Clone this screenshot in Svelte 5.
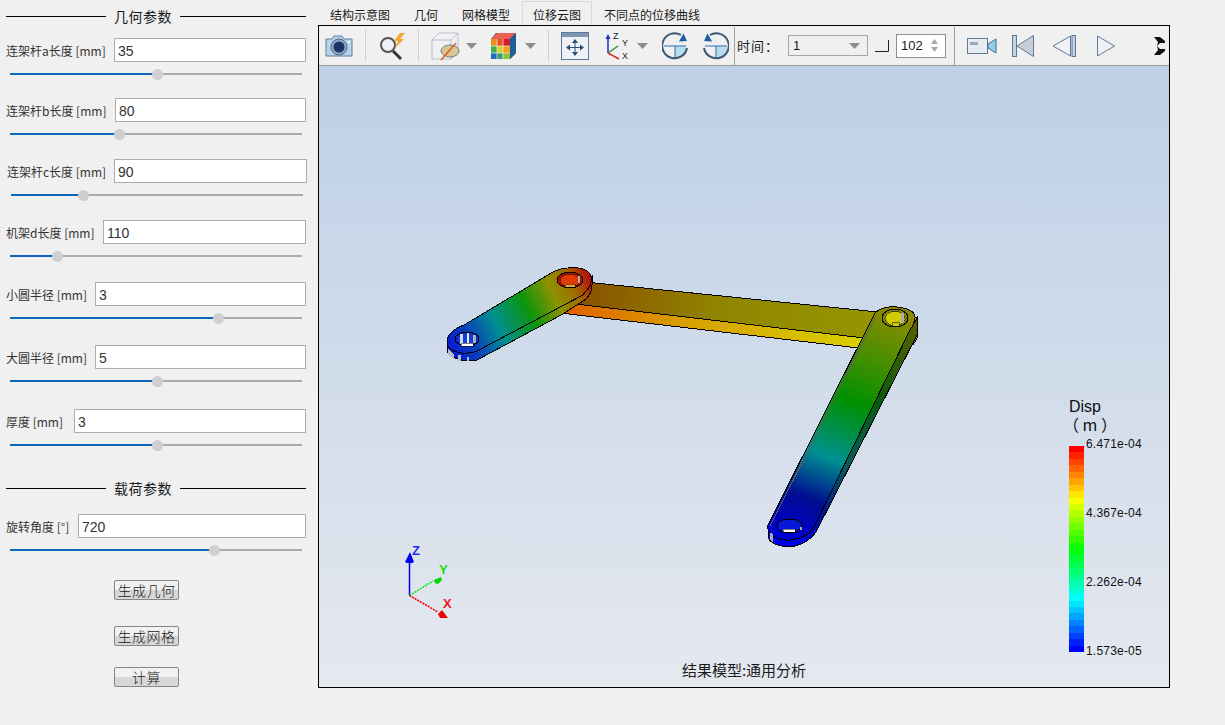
<script>
  const geometry = [
    { label: '连架杆a长度 [mm]', value: '35', labelW: 108, pitch: 60, thumb: 147, nudge: 0 },
    { label: '连架杆b长度 [mm]', value: '80', labelW: 109, pitch: 61, thumb: 109, nudge: 0 },
    { label: '连架杆c长度 [mm]', value: '90', labelW: 107, pitch: 61, thumb: 72, nudge: 1 },
    { label: '机架d长度 [mm]', value: '110', labelW: 97, pitch: 62, thumb: 47, nudge: 0 },
    { label: '小圆半径 [mm]', value: '3', labelW: 89, pitch: 63, thumb: 208, nudge: 0 },
    { label: '大圆半径 [mm]', value: '5', labelW: 89, pitch: 64, thumb: 147, nudge: 0 },
    { label: '厚度 [mm]', value: '3', labelW: 68, pitch: 60, thumb: 147, nudge: 0 }
  ];
  const load = { label: '旋转角度 [°]', value: '720', labelW: 72, pitch: 60, thumb: 204, nudge: 0 };
  const tabs = ['结构示意图', '几何', '网格模型', '位移云图', '不同点的位移曲线'];
  const active = 3;

  // legend colour bands, red at the top, blue at the bottom
  const bands = Array.from({ length: 32 }, (_, i) => `hsl(${(i / 31) * 240}, 100%, 50%)`);
  const ticks = ['6.471e-04', '4.367e-04', '2.262e-04', '1.573e-05'];
</script>

{#snippet param(p)}
  <div class="param" style="height: {p.pitch}px; margin-left: {p.nudge}px">
    <div class="row">
      <span class="label" style="width: {p.labelW}px">{p.label}</span>
      <input class="field" value={p.value} />
    </div>
    <div class="slider">
      <div class="fill" style="width: {p.thumb}px"></div>
      <div class="thumb" style="left: {p.thumb}px"></div>
    </div>
  </div>
{/snippet}

{#snippet caret()}
  <svg class="caret" width="11" height="8" viewBox="0 0 11 8"><path d="M0 1h11L5.500 7z" fill="#8c8c8c" /></svg>
{/snippet}

<div class="app">
  <aside class="side">
    <div class="group-title"><span>几何参数</span></div>
    {#each geometry as p}
      {@render param(p)}
    {/each}
    <div class="group-title second"><span>载荷参数</span></div>
    {@render param(load)}
    <button class="btn first">生成几何</button>
    <button class="btn mesh">生成网格</button>
    <button class="btn calc">计算</button>
  </aside>

  <main class="main">
    <nav class="tabs">
      {#each tabs as t, i}
        <div class="tab" class:on={i === active}>{t}</div>
      {/each}
    </nav>

    <section class="viewer">
      <div class="toolbar">
        <svg class="t-cam" width="28" height="24" viewBox="0 0 28 24">
          <path d="M1 5h6l2-3h8l2 3h8v17H1z" fill="#b9d0e6" stroke="#5d7f9f" />
          <circle cx="14" cy="13" r="8" fill="#8fa8c2" stroke="#50708f" />
          <circle cx="14" cy="13" r="5.500" fill="#1c3566" />
          <rect x="23" y="7" width="2" height="2" fill="#fff" />
        </svg>
        <i class="sep s1"></i>
        <svg class="t-mag" width="29" height="28" viewBox="0 0 29 28">
          <circle cx="10" cy="13" r="7" fill="#eef2f5" stroke="#555" stroke-width="2" />
          <path d="M15 19l8 8" stroke="#333" stroke-width="3" />
          <path d="M22 1l-6 8h4l-3 7 9-9h-4l5-6z" fill="#f2a735" />
        </svg>
        <i class="sep s2"></i>
        <svg class="t-box" width="29" height="30" viewBox="0 0 29 30">
          <path d="M1 9l7-7h19v19l-7 7H1z" fill="#f1f1f1" stroke="#b8bfca" />
          <path d="M1 9h19v19M20 9l7-7" fill="none" stroke="#b8bfca" />
          <ellipse cx="19" cy="20" rx="9" ry="6" fill="#d8c890" stroke="#6a7f99" />
          <path d="M10 29L25 12" stroke="#e0552a" stroke-width="1.500" />
        </svg>
        {@render caret()}
        <svg class="t-cube" width="27" height="28" viewBox="0 0 27 28">
          <path d="M6 1h20v20l-6 6H1V7z" fill="#1a4f78" />
          <path d="M1 7h6v7H1z" fill="#e89020" /><path d="M7 7h6v7H7z" fill="#e85020" /><path d="M13 7h7v7h-7z" fill="#d02030" />
          <path d="M1 14h6v7H1z" fill="#40b050" /><path d="M7 14h6v7H7z" fill="#d8d030" /><path d="M13 14h7v7h-7z" fill="#f0a020" />
          <path d="M1 21h6v6H1z" fill="#1c6cc0" /><path d="M7 21h6v6H7z" fill="#30a080" /><path d="M13 21h7v6h-7z" fill="#90c040" />
          <path d="M1 7l6-6h19l-6 6z" fill="#e86050" />
          <path d="M20 7l6-6v20l-6 6z" fill="#1f5f98" />
          <path d="M7 7v20M13 7v20M1 14h19M1 21h19" stroke="#f3f0d8" stroke-width=".7" />
        </svg>
        {@render caret()}
        <i class="sep s3"></i>
        <svg class="t-fit" width="28" height="28" viewBox="0 0 28 28">
          <rect x=".5" y=".5" width="27" height="27" fill="#eef1f5" stroke="#5f7a98" />
          <rect x="1" y="1" width="26" height="4" fill="#7f97b3" />
          <path d="M14 8v15M7 15.500h14" stroke="#2c4d73" />
          <path d="M14 7l3 4h-6zM14 24l3-4h-6zM5 15.500l4-3v6zM23 15.500l-4-3v6z" fill="#2c4d73" />
        </svg>
        <svg class="t-axes" width="24" height="28" viewBox="0 0 24 28">
          <path d="M3 21V6" stroke="#1730c8" stroke-width="1.500" />
          <path d="M3 2l2.500 5h-5z" fill="#1730c8" />
          <path d="M3 21l10-7" stroke="#1d9a33" stroke-width="1.500" />
          <path d="M3 21l11 6" stroke="#d62c2c" stroke-width="1.500" />
          <text x="8" y="7" class="ax">Z</text><text x="17" y="14" class="ax">Y</text><text x="17" y="27" class="ax">X</text>
        </svg>
        {@render caret()}
        <svg class="t-rot" width="26" height="28" viewBox="0 0 26 28">
          <path d="M13 14h11a11 11 0 0 1-11 12z" fill="#b8dcf0" />
          <path d="M2 14h22M13 14v12" stroke="#2a6fa8" />
          <path d="M19 3A12.500 12.500 0 1 0 25 16" fill="none" stroke="#3d5870" stroke-width="2" />
          <path d="M25 9l-8 .5 4.500-8z" fill="#1a5ea8" />
        </svg>
        <svg class="t-rot2" width="26" height="28" viewBox="0 0 26 28">
          <path d="M13 14h11v2a11 11 0 0 1-11 10z" fill="#b8dcf0" />
          <path d="M2 14h22M13 14v12" stroke="#2a6fa8" />
          <path d="M7 3A12.500 12.500 0 1 1 1 16" fill="none" stroke="#3d5870" stroke-width="2" />
          <path d="M1 9l8 .5-4.500-8z" fill="#1a5ea8" />
        </svg>
        <i class="sep strong s4"></i>
        <span class="time">时间：</span>
        <div class="combo"><span>1</span><svg width="11" height="6" viewBox="0 0 11 6"><path d="M0 0h11L5.500 6z" fill="#8c8c8c" /></svg></div>
        <svg class="corner" width="14" height="12" viewBox="0 0 14 12"><path d="M0 11.500h13.500V0" fill="none" stroke="#222" /></svg>
        <div class="spin">
          <span>102</span>
          <svg width="7" height="13" viewBox="0 0 7 13"><path d="M3.500 0L7 5H0zM3.500 13L0 8h7z" fill="#a8a8a8" /></svg>
        </div>
        <i class="sep strong s5"></i>
        <svg class="t-video" width="30" height="18" viewBox="0 0 30 18">
          <rect x=".5" y="1.500" width="20" height="15" fill="#e8ecf0" stroke="#5f7a98" />
          <rect x="3" y="5" width="8" height="3" fill="#99a8ba" />
          <path d="M21 7l8-5v14l-8-5z" fill="#8fd0e8" stroke="#45688c" />
        </svg>
        <svg class="t-first" width="22" height="22" viewBox="0 0 22 22">
          <rect x=".5" y=".5" width="4" height="21" fill="#c5d2e0" stroke="#5f7a98" />
          <path d="M21.500.5v21L5 11z" fill="#c8ced6" stroke="#5f7a98" />
        </svg>
        <svg class="t-prev" width="24" height="22" viewBox="0 0 24 22">
          <path d="M18.500 1v20L1 11z" fill="#eef0f3" stroke="#5f7a98" />
          <rect x="20" y=".5" width="3.500" height="21" fill="#c5d2e0" stroke="#5f7a98" />
        </svg>
        <svg class="t-play" width="18" height="22" viewBox="0 0 18 22">
          <path d="M.5 1v20L17.500 11z" fill="#eef0f3" stroke="#5f7a98" />
        </svg>
        <svg class="t-more" width="12" height="18" viewBox="0 0 12 18">
          <path d="M0 0h6l5 4v2H6L3 9l3 3h5v2l-5 4H0l4-5-1-4 1-4z" fill="#111" />
        </svg>
      </div>

      <div class="canvas">
        <svg class="model" width="850" height="621" viewBox="319 66 850 621">
          <defs>
            <linearGradient id="linkA" gradientUnits="userSpaceOnUse" x1="452" y1="345" x2="588" y2="275">
              <stop offset="0" stop-color="#0a1ed0" />
              <stop offset=".14" stop-color="#0a45b8" />
              <stop offset=".32" stop-color="#008f92" />
              <stop offset=".55" stop-color="#0c950c" />
              <stop offset=".74" stop-color="#8c9200" />
              <stop offset=".88" stop-color="#a06a00" />
              <stop offset="1" stop-color="#b8120c" />
            </linearGradient>
            <linearGradient id="linkC" gradientUnits="userSpaceOnUse" x1="880" y1="310" x2="790" y2="545">
              <stop offset="0" stop-color="#8a8a00" />
              <stop offset=".18" stop-color="#4a8f00" />
              <stop offset=".38" stop-color="#009000" />
              <stop offset=".62" stop-color="#009090" />
              <stop offset=".8" stop-color="#000e90" />
              <stop offset=".93" stop-color="#0000c0" />
              <stop offset="1" stop-color="#0000e0" />
            </linearGradient>
            <linearGradient id="linkCSide" gradientUnits="userSpaceOnUse" x1="917" y1="320" x2="800" y2="545">
              <stop offset="0" stop-color="#5a6000" />
              <stop offset=".35" stop-color="#0a5a10" />
              <stop offset=".65" stop-color="#0a5a60" />
              <stop offset=".85" stop-color="#001090" />
              <stop offset="1" stop-color="#0000e8" />
            </linearGradient>
            <linearGradient id="barTop" gradientUnits="userSpaceOnUse" x1="590" y1="290" x2="880" y2="325">
              <stop offset="0" stop-color="#8a5500" />
              <stop offset=".45" stop-color="#918500" />
              <stop offset="1" stop-color="#969600" />
            </linearGradient>
            <linearGradient id="barSide" gradientUnits="userSpaceOnUse" x1="565" y1="310" x2="865" y2="345">
              <stop offset="0" stop-color="#e06000" />
              <stop offset=".4" stop-color="#d8a000" />
              <stop offset="1" stop-color="#d8d000" />
            </linearGradient>
          </defs>

          <g class="solid">
            <!-- coupler bar -->
            <path d="M880 312L917 318V338Q915 345 907 348L895 345Z" fill="#a89c00" stroke="#000" />
            <path d="M585 282L878 312L864 338L575 304Z" fill="url(#barTop)" stroke="#000" />
            <path d="M575 304L864 338L859 348L560 313Z" fill="url(#barSide)" stroke="#000" />

            <!-- crank -->
            <path d="M447 342v9C449 358 465 363 477 360L563 314L586 299Q592 293 592 285V276Z" fill="url(#linkA)" stroke="#000" />
            <path d="M447 342C447 333 456 328 464 325L553 272C562 267 580 266 587 271C593 275 593 284 586 291L583 295L477 351C465 356 447 352 447 342Z" fill="url(#linkA)" stroke="#000" />
            <path d="M448 349l6 5v5l-6-4zM458 355h3v6h-3zM467 357h2v4h-2z" fill="#b8bcc6" />
            <ellipse cx="467" cy="339" rx="12" ry="7" fill="#0c2cc4" stroke="#000" />
            <ellipse cx="467" cy="339.500" rx="9" ry="5.500" fill="#1040d0" />
            <rect x="460" y="334" width="3" height="10" fill="#d0d8f0" />
            <rect x="467" y="333" width="2" height="10" fill="#e8ecf8" />
            <rect x="473" y="335" width="3" height="8" fill="#a8b0c8" />
            <rect x="461" y="343" width="12" height="3" fill="#fff" stroke="#000" stroke-width=".5" />
            <ellipse cx="570" cy="280" rx="13" ry="8" fill="#a81008" stroke="#000" />
            <ellipse cx="570" cy="280.500" rx="10" ry="6.500" fill="#e03a06" stroke="#000" stroke-width=".5" />
            <rect x="578" y="276" width="2" height="7" fill="#b0b0b0" />
            <rect x="565" y="284" width="10" height="3" fill="#e8a030" stroke="#000" stroke-width=".5" />

            <!-- rocker -->
            <path d="M768 525v13C772 545 785 548 795 546C804 544 812 538 816 532L917 335V318L910 330L815 525Z" fill="url(#linkCSide)" stroke="#000" />
            <path d="M768 525L875 313C880 308 890 306 897 307C908 308 916 312 915 318C915 322 912 327 910 330L815 525C812 533 803 539 790 540C777 541 766 534 768 525Z" fill="url(#linkC)" stroke="#000" />
            <path d="M770 526L876 316" stroke="#5e5e5e" />
            <ellipse cx="895" cy="318" rx="13" ry="9" fill="#7e8200" stroke="#000" />
            <ellipse cx="895" cy="318.500" rx="10" ry="7" fill="#d0cc00" stroke="#000" stroke-width=".5" />
            <rect x="901" y="313" width="3" height="10" fill="#a8aeb4" />
            <rect x="892" y="322" width="7" height="4" fill="#d0c800" stroke="#000" stroke-width=".5" />
            <ellipse cx="789.500" cy="526" rx="12.500" ry="7" fill="#0818d8" stroke="#000" />
            <rect x="783" y="529" width="12" height="3" fill="#fff" stroke="#000" stroke-width=".5" />
            <path d="M770 533v7l3 2v-8zM800 527h2v3h-2z" fill="#a9adb8" />
          </g>

          <!-- triad -->
          <path d="M409.500 595.500V560" stroke="#0000f0" stroke-width="1.500" />
          <path d="M410 552l4 10-2 1h-5l-2-1z" fill="#0000f0" />
          <path d="M409.500 595.500L433 581" stroke="#00ee00" stroke-dasharray="2 1" stroke-width="1.500" />
          <path d="M441 577l1 3-4 4-3-1-1-3z" fill="#00d800" />
          <path d="M409.500 595.500L438 612" stroke="#f00000" stroke-dasharray="2 1" stroke-width="1.500" />
          <path d="M442 610l6 8h-8l-2-4z" fill="#f00000" />
          <text x="412" y="555" class="tz">Z</text>
          <text x="439" y="574" class="ty">Y</text>
          <text x="443" y="608" class="tx">X</text>
        </svg>

        <div class="legend">
          <div class="legend-title">Disp</div>
          <div class="legend-unit">（ m ）</div>
          <div class="scale">
            <div class="bar">
              {#each bands as c}<div style="background: {c}"></div>{/each}
            </div>
            <div class="ticks">
              {#each ticks as t}<span>{t}</span>{/each}
            </div>
          </div>
        </div>

        <div class="caption">结果模型:通用分析</div>
      </div>
    </section>
  </main>
</div>

<style>
  :global(body) {
    margin: 0;
    background: #f0f0f0;
    overflow: hidden;
  }

  .app {
    display: flex;
    width: 1225px;
    height: 725px;
    background: #f0f0f0;
    color: #1a1a1a;
    font-family: "Noto Sans CJK SC", "Liberation Sans", sans-serif;
    font-size: 12px;
  }

  /* Left panel */
  .side {
    width: 300px;
    padding: 6px 12px 0 6px;
    flex-shrink: 0;
    display: flex;
    flex-direction: column;
    align-items: flex-start;
  }

  .group-title {
    width: 300px;
    height: 20px;
    margin-bottom: 12px;
    display: flex;
    align-items: center;
    gap: 8px;
    font-size: 14px;
    letter-spacing: .5px;
  }
  .group-title::before {
    content: "";
    width: 100px;
    height: 1px;
    background: #000;
  }
  .group-title::after {
    content: "";
    flex: 1;
    height: 1px;
    background: #000;
  }
  .group-title.second {
    margin-top: 9px;
    margin-bottom: 16px;
  }

  .param { width: 300px; }

  .row {
    display: flex;
    align-items: center;
    height: 24px;
  }
  .label {
    flex-shrink: 0;
    white-space: nowrap;
    font-size: 12px;
    color: #333;
  }
  .field {
    flex: 1;
    min-width: 0;
    height: 24px;
    box-sizing: border-box;
    border: 1px solid #acacac;
    background: #fff;
    padding: 1px 3px 0;
    font-family: "Liberation Sans", sans-serif;
    font-size: 14px;
    color: #333;
    outline: none;
  }

  .slider {
    position: relative;
    width: 292px;
    height: 2px;
    margin: 11px 0 0 4px;
    background: #ababab;
  }
  .fill {
    height: 100%;
    background: #0f67b9;
  }
  .thumb {
    position: absolute;
    top: -4.500px;
    width: 11px;
    height: 11px;
    margin-left: -5.500px;
    border-radius: 50%;
    background: #cfcfcf;
  }

  .btn {
    width: 65px;
    height: 20px;
    padding: 0;
    box-sizing: border-box;
    border: 1px solid #858585;
    border-radius: 2px;
    background: linear-gradient(#f1f1f1 50%, #d7d7d7 50%);
    font-family: "Noto Sans CJK SC", sans-serif;
    font-size: 14px;
    font-weight: 300;
    line-height: 18px;
    letter-spacing: .5px;
    color: #222;
    align-self: flex-start;
    margin-left: 108px;
  }
  .btn.first { margin-top: 6px; }
  .btn.mesh { margin-top: 26px; }
  .btn.calc { margin-top: 21px; }

  /* Tabs */
  .main {
    width: 852px;
    flex-shrink: 0;
  }
  .tabs {
    display: flex;
    height: 25px;
    align-items: flex-end;
  }
  .tab {
    height: 24px;
    line-height: 27px;
    padding: 0 12px;
    box-sizing: border-box;
    white-space: nowrap;
  }
  .tab.on {
    border: 1px solid #d9d9d9;
    border-bottom: 0;
    padding: 0 10px;
    line-height: 25px;
    background: #f0f0f0;
  }

  /* Viewer */
  .viewer {
    box-sizing: border-box;
    width: 852px;
    height: 663px;
    border: 1px solid #000;
    display: flex;
    flex-direction: column;
  }
  .toolbar {
    height: 40px;
    flex-shrink: 0;
    box-sizing: border-box;
    border-bottom: 1px solid #9a9a9a;
    display: flex;
    align-items: center;
    overflow: hidden;
  }
  .sep {
    width: 1px;
    height: 31px;
    background: #cfcfcf;
    flex-shrink: 0;
  }
  .sep.strong {
    height: 38px;
    background: #a2a2a2;
  }
  .toolbar svg { flex-shrink: 0; }
  .ax { font: 9px "Liberation Sans", sans-serif; fill: #222; }
  .caret { margin-left: 6px; margin-top: 1px; }

  .t-cam { margin-left: 6px; }
  .s1 { margin-left: 12px; }
  .t-mag { margin-left: 12px; }
  .s2 { margin-left: 11px; }
  .t-box { margin-left: 12px; }
  .t-cube { margin-left: 13px; }
  .t-cube + .caret { margin-left: 8px; }
  .s3 { margin-left: 12px; }
  .t-fit { margin-left: 12px; }
  .t-axes { margin-left: 16px; }
  .t-axes + .caret { margin-left: 8px; }
  .t-rot { margin-left: 14px; }
  .t-rot2 { margin-left: 15px; }
  .s4 { margin-left: 5px; }

  .time {
    margin-left: 2px;
    width: 44px;
    font-size: 13px;
    letter-spacing: 1px;
    flex-shrink: 0;
    white-space: nowrap;
  }
  .combo {
    margin-left: 7px;
    width: 80px;
    height: 21px;
    box-sizing: border-box;
    border: 1px solid #a8a8a8;
    padding: 0 7px 0 4px;
    display: flex;
    align-items: center;
    justify-content: space-between;
    font-family: "Liberation Sans", sans-serif;
    font-size: 13px;
    flex-shrink: 0;
  }
  .corner { margin-left: 7px; }
  .spin {
    margin-left: 7px;
    width: 50px;
    height: 24px;
    box-sizing: border-box;
    border: 1px solid #8e8e8e;
    background: #fff;
    padding: 0 7px 0 4px;
    display: flex;
    align-items: center;
    justify-content: space-between;
    font-family: "Liberation Sans", sans-serif;
    font-size: 13px;
    flex-shrink: 0;
  }
  .s5 { margin-left: 8px; }
  .t-video { margin-left: 12px; }
  .t-first { margin-left: 15px; }
  .t-prev { margin-left: 18px; }
  .t-play { margin-left: 21px; }
  .t-more { margin-left: 39px; }

  /* 3D view */
  .canvas {
    position: relative;
    flex: 1;
    background: linear-gradient(#bdd0e6, #e5e8ef);
    overflow: hidden;
  }
  .model {
    position: absolute;
    inset: 0;
  }
  .solid { shape-rendering: crispEdges; }
  .tz, .ty, .tx {
    font: bold 13px "Liberation Sans", sans-serif;
  }
  .tz { fill: #1c2ee8; }
  .ty { fill: #10e010; }
  .tx { fill: #f01818; }

  .legend {
    position: absolute;
    left: 750px;
    top: 332px;
    color: #111;
    font-family: "Liberation Sans", sans-serif;
  }
  .legend-title {
    font-size: 16px;
    line-height: 18px;
  }
  .legend-unit {
    font-family: "Noto Sans CJK SC", sans-serif;
    font-size: 16px;
    line-height: 17px;
    margin-left: -6px;
    margin-bottom: 13px;
    white-space: nowrap;
  }
  .scale { display: flex; }
  .bar {
    width: 15px;
    height: 206px;
    display: flex;
    flex-direction: column;
  }
  .bar div { flex: 1; }
  .ticks {
    height: 221px;
    margin: -9px 0 0 2px;
    display: flex;
    flex-direction: column;
    justify-content: space-between;
    font-size: 12px;
    line-height: 14px;
    letter-spacing: .2px;
  }

  .caption {
    position: absolute;
    left: 0;
    right: 0;
    bottom: 7px;
    text-align: center;
    font-size: 15px;
    line-height: 20px;
  }
</style>
